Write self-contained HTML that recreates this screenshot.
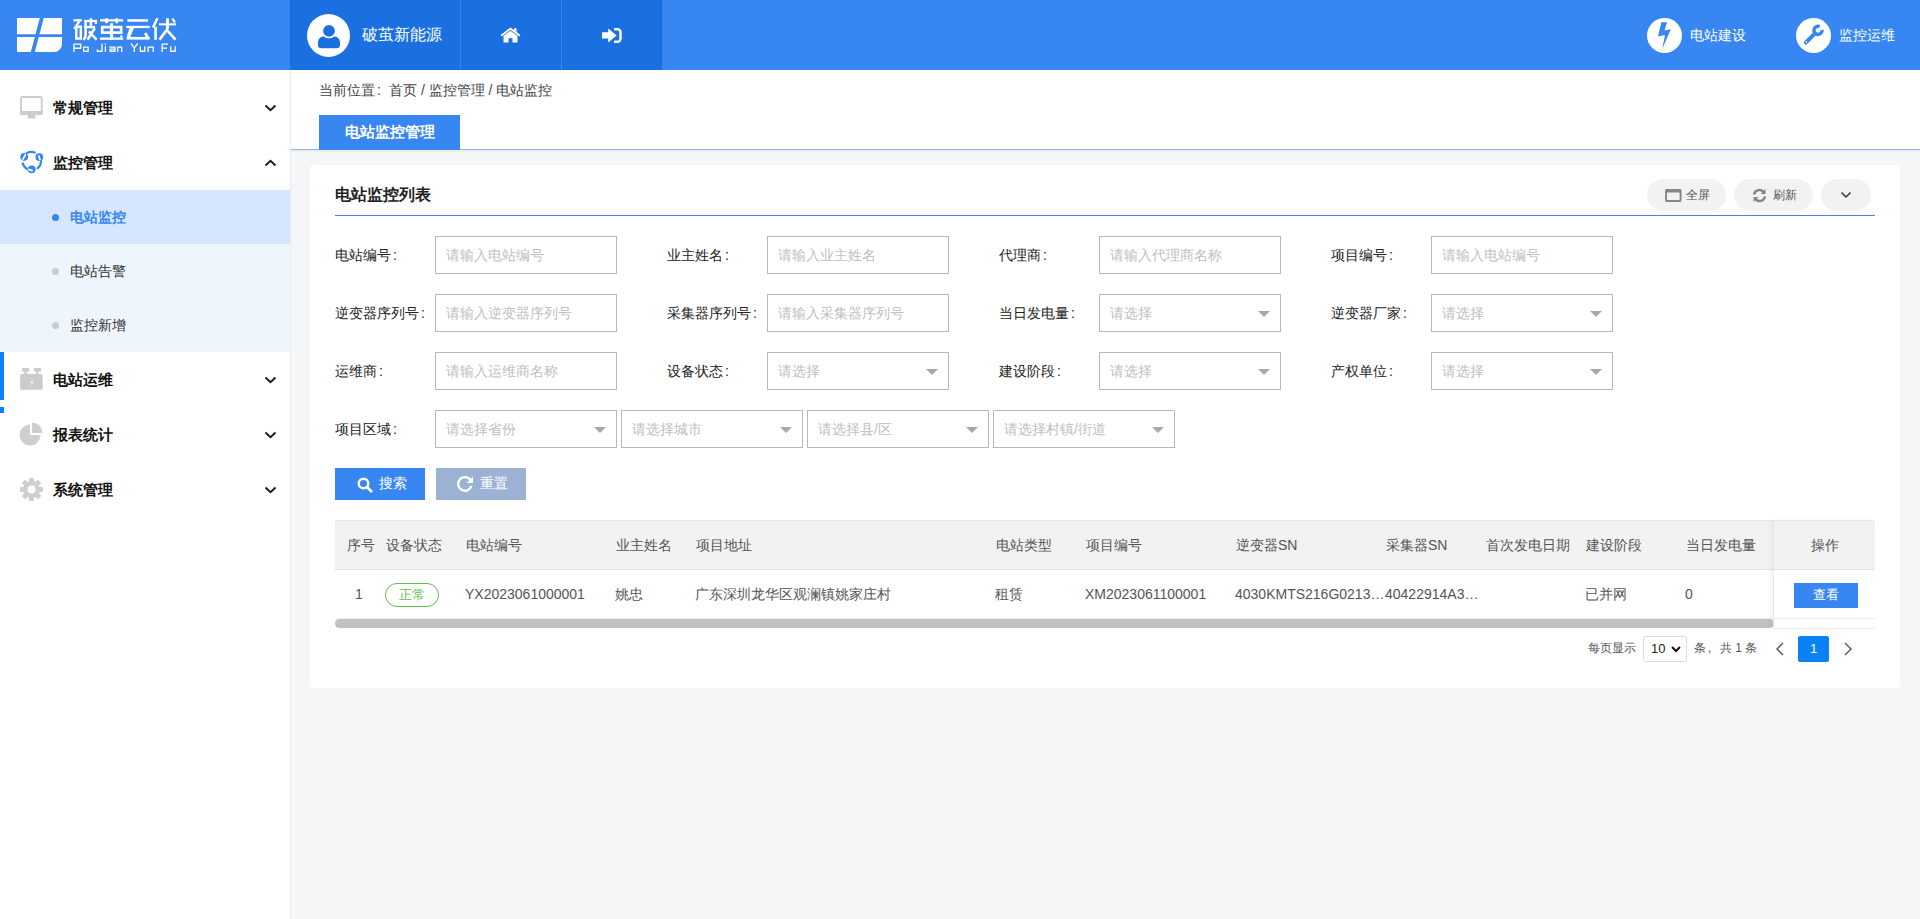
<!DOCTYPE html>
<html><head><meta charset="utf-8">
<style>
*{box-sizing:border-box;margin:0;padding:0}
html,body{width:1920px;height:919px;overflow:hidden;background:#f4f6f8;font-family:"Liberation Sans",sans-serif;color:#333}
.a{position:absolute}
#hdr{position:absolute;left:0;top:0;width:1920px;height:70px;background:#3886f2}
#hdrdark{position:absolute;left:290px;top:0;width:372px;height:70px;background:#1b70e1}
.vdiv{position:absolute;top:0;width:1px;height:70px;background:#3a82ea}
#side{position:absolute;left:0;top:70px;width:291px;height:849px;background:#fff;border-right:1px solid #ebebeb}
.mi{position:absolute;left:0;width:290px;height:55px}
.mi .t{position:absolute;left:53px;top:0;line-height:55px;font-size:15px;font-weight:bold;color:#111}
.mi svg.ic{position:absolute;left:19px;top:15px}
.mi svg.chev{position:absolute;left:263.5px;top:23px}
.sub{position:absolute;left:0;width:290px;height:54px}
.sub .dot{position:absolute;left:52px;top:24px;width:7px;height:7px;border-radius:50%;background:#ccc}
.sub .t{position:absolute;left:70px;top:0;line-height:54px;font-size:14px;color:#333}
#band{position:absolute;left:291px;top:70px;width:1629px;height:80px;background:#fff;border-bottom:1px solid #8db9f3}
#card{position:absolute;left:310px;top:165px;width:1590px;height:523px;background:#fff;border-radius:4px}
.lbl{position:absolute;font-size:14px;color:#222;line-height:38px;height:38px}
.inp{position:absolute;width:182px;height:38px;border:1px solid #b8b8b8;background:#fff;font-size:14px;color:#c0c0c0;line-height:36px;padding-left:10px}
.inp .car{position:absolute;right:10px;top:16px;width:0;height:0;border-left:6px solid transparent;border-right:6px solid transparent;border-top:6px solid #a8a8a8}
.pill{position:absolute;top:179px;height:32px;border-radius:16px;background:#f2f2f2;font-size:12px;color:#555;line-height:32px}
.c{display:inline-block;width:14px;padding-left:2px}
.th{position:absolute;top:520px;line-height:50px;font-size:14px;color:#555}
.td{position:absolute;top:570px;line-height:48px;font-size:14px;color:#555}
</style></head><body>
<div id="hdr"></div>
<div id="hdrdark"></div>
<div class="vdiv" style="left:460px"></div>
<div class="vdiv" style="left:561px"></div>

<!-- logo -->
<svg class="a" style="left:17px;top:18px" width="46" height="35" viewBox="0 0 46 35">
  <path d="M0 0H45V26A8 8 0 0 1 37 34H0Z" fill="#fff"/>
  <path d="M0 17.6H46" stroke="#3886f2" stroke-width="2.6"/>
  <path d="M25.06 -1L15.27 36" stroke="#3886f2" stroke-width="3.8"/>
</svg>
<svg class="a" style="left:70px;top:15px" width="110" height="30" viewBox="0 0 110 30" fill="none" stroke="#fff">
  <g stroke-width="2.3">
  <path d="M3.5 5.3H11.8"/><path d="M9.3 6.3L4.2 13.8"/>
  <rect x="6.3" y="11.7" width="4.5" height="11.8" stroke-width="2.5"/>
  <path d="M15.6 4.9V20Q15.6 23 13.4 24.8" stroke-width="2.6"/>
  <path d="M14.3 5.95H26.9" stroke-width="2.1"/><path d="M25.9 4.9V9"/>
  <path d="M20.9 3.3V10.8" stroke-width="2.6"/>
  <path d="M14.3 12.1H25.2" stroke-width="2.4"/>
  <path d="M24.8 13L17.6 24.6" stroke-width="2.6"/><path d="M18.8 16.3L26.6 24.6" stroke-width="2.6"/>
  </g>
  <g stroke-width="2.3">
  <path d="M30 5.35H53.2"/><path d="M36.55 3.3V8.2" stroke-width="2.7"/><path d="M46.7 3.3V8.2" stroke-width="2.6"/>
  <path d="M41.6 8.2V24.8" stroke-width="3"/>
  <rect x="32.2" y="12.1" width="18.95" height="5.5" stroke-width="2.65"/>
  <path d="M30 23.65H53.2"/><path d="M51.4 20.3V22.6" stroke-width="2.2"/>
  </g>
  <g stroke-width="2.5">
  <path d="M57.4 5.45H78.1"/><path d="M56.2 11.95H79.7" stroke-width="2.3"/>
  <path d="M59.5 13.1L64 13.1 60.2 22 56.6 22Z" fill="#fff" stroke="none"/>
  <path d="M56.6 23.25H79.7" stroke-width="2.7"/>
  <path d="M75.3 18L78.1 23.5" stroke-width="2.8"/>
  </g>
  <g stroke-width="2.6">
  <path d="M87.4 3.3L83 12.6" stroke-width="2.5"/><path d="M85.6 11.7V24.8"/>
  <path d="M88.9 9.35H105.9" stroke-width="2.1"/><path d="M97.5 3.3V14" stroke-width="2.9"/>
  <path d="M97.4 14L89.5 24.6" stroke-width="2.7"/><path d="M97.4 15.7L105.5 24.6" stroke-width="2.7"/>
  <path d="M102.3 3.6L105 7.2" stroke-width="2.4"/>
  </g>
</svg>
<svg class="a" style="left:70px;top:40px" width="110" height="15" viewBox="0 0 110 15" fill="none" stroke="#fff" stroke-width="1.3" stroke-linejoin="round">
  <path d="M3.9 12V4.15H10.8V8.25H3.9"/><rect x="13.65" y="7.05" width="4.5" height="4.2"/>
  <path d="M32 3.4V11.25H27.35V9.6"/><path d="M35.4 3.4V4.9M35.4 6.3V12"/>
  <path d="M39.3 7.05H45.05V11.25H40.05V9.2H45.05"/><path d="M47.75 12V7.05H51.65V12"/>
  <path d="M60.9 3.4L64.3 8.2 67.7 3.4M64.3 8.2V12"/><path d="M70.35 6.3V11.25H74.85V6.3"/>
  <path d="M78.15 12V7.05H83.25V12"/><path d="M92.15 12V4.15H98M92.15 8.2H97"/>
  <path d="M100.75 6.3V11.25H105.25V6.3"/>
</svg>

<!-- avatar -->
<svg class="a" style="left:307px;top:14px" width="43" height="43" viewBox="0 0 43 43">
  <circle cx="21.5" cy="21.5" r="21.5" fill="#fff"/>
  <path d="M10.9 28.4A6.2 6.2 0 0 1 17.1 22.2H26.8A6.2 6.2 0 0 1 33 28.4V30.8A3.5 3.5 0 0 1 29.5 34.3H14.4A3.5 3.5 0 0 1 10.9 30.8Z" fill="#1b70e1"/>
  <circle cx="22" cy="16.9" r="7.4" fill="#fff"/>
  <circle cx="22" cy="16.9" r="5.9" fill="#1b70e1"/>
</svg>
<div class="a" style="left:362px;top:24px;font-size:16px;color:#fff;line-height:22px">破茧新能源</div>
<!-- home icon -->
<svg class="a" style="left:500px;top:27.3px" width="21" height="16" viewBox="0 0 21 17" preserveAspectRatio="none">
  <path d="M10.5 0.5L0.6 8.6 1.8 10 10.5 2.9 19.2 10 20.4 8.6 16.5 5.4V1.3H14V3.4Z" fill="#fff"/>
  <path d="M3.5 9.6L10.5 3.9 17.5 9.6V16.5H12.5V12H8.5V16.5H3.5Z" fill="#fff"/>
</svg>
<!-- sign in icon -->
<svg class="a" style="left:601px;top:28px" width="21" height="16" viewBox="0 0 21 16">
  <path d="M1.3 4.3H7.2V0.4L15.7 7.5 7.2 14.6V10.6H1.3Q1 10.6 1 10.3V4.6Q1 4.3 1.3 4.3Z" fill="#fff"/>
  <path d="M13 1.2H16.5A3 3 0 0 1 19.5 4.2V10.8A3 3 0 0 1 16.5 13.8H13" stroke="#fff" stroke-width="2.4" fill="none"/>
</svg>

<!-- right header icons -->
<svg class="a" style="left:1647px;top:18px" width="35" height="35" viewBox="0 0 35 35">
  <circle cx="17.5" cy="17.5" r="17.5" fill="#fff"/>
  <path d="M14.3 4.3H20L17.5 12.5 23.8 11.3 15.3 30.8 18 17 11 18.5Z" fill="#3886f2"/>
</svg>
<div class="a" style="left:1690px;top:25px;font-size:14px;color:#fff;line-height:20px">电站建设</div>
<svg class="a" style="left:1796px;top:18px" width="35" height="35" viewBox="0 0 35 35">
  <circle cx="17.5" cy="17.5" r="17.5" fill="#fff"/>
  <path d="M9.8 24.6L19 15.4" stroke="#3886f2" stroke-width="4" stroke-linecap="round"/>
  <path d="M26.1 11.9A4.1 4.1 0 1 1 23.7 8.6" stroke="#3886f2" stroke-width="3.4" fill="none"/>
  <circle cx="10.4" cy="24.1" r="0.9" fill="#fff"/>
</svg>
<div class="a" style="left:1839px;top:25px;font-size:14px;color:#fff;line-height:20px">监控运维</div>

<!-- sidebar -->
<div id="side"></div>
<div class="mi" style="top:80px">
  <svg class="ic" width="25" height="25" viewBox="0 0 25 25"><rect x="2" y="2" width="20.7" height="17.2" rx="1.3" fill="#fff" stroke="#cccccc" stroke-width="1.8"/><path d="M1.1 15.9H23.6V18.6A1.5 1.5 0 0 1 22.1 20.1H2.6A1.5 1.5 0 0 1 1.1 18.6Z" fill="#cccccc"/><path d="M9.1 20H16L16.7 23.4H8.4Z" fill="#cccccc"/></svg>
  <div class="t">常规管理</div>
  <svg class="chev" width="13" height="9" viewBox="0 0 13 9"><path d="M1.5 2.5L6.5 7.2 11.5 2.5" stroke="#1a1a1a" stroke-width="1.9" fill="none"/></svg>
</div>
<div class="mi" style="top:135px">
  <svg class="a" style="left:16px;top:11px" width="32" height="32" viewBox="0 0 32 32" fill="none" stroke="#3886f2" stroke-width="2.2" stroke-linecap="round">
    <path d="M10.6 7.1A9.6 9.6 0 0 1 18.7 6.5"/><path d="M25.1 14.9A9.6 9.6 0 0 1 21.6 22.2"/><path d="M11.5 23.3A9.6 9.6 0 0 1 6.7 17.4"/>
    <g fill="#3886f2" stroke="none"><circle cx="8.2" cy="10.8" r="3.9"/><circle cx="23.3" cy="11.1" r="3.9"/><circle cx="15.7" cy="23.3" r="3.9"/></g>
    <g stroke="#fff" stroke-width="1.7"><path d="M7 13.2L9.4 8.6"/><path d="M22.9 10L23.9 13.6"/><path d="M12.6 23.4L16.2 24.6"/></g>
  </svg>
  <div class="t">监控管理</div>
  <svg class="chev" width="13" height="9" viewBox="0 0 13 9"><path d="M1.5 7.5L6.5 2.8 11.5 7.5" stroke="#1a1a1a" stroke-width="1.9" fill="none"/></svg>
</div>
<div class="a" style="left:0;top:190px;width:290px;height:162px;background:#eef5fd"></div>
<div class="sub" style="top:190px;background:#d5e6fd"><div class="dot" style="background:#3886f2"></div><div class="t" style="color:#3886f2;font-weight:bold">电站监控</div></div>
<div class="sub" style="top:244px"><div class="dot"></div><div class="t">电站告警</div></div>
<div class="sub" style="top:298px"><div class="dot"></div><div class="t">监控新增</div></div>
<div class="a" style="left:0;top:352px;width:4px;height:48px;background:#0a82f5"></div>
<div class="a" style="left:0;top:407px;width:4px;height:6px;background:#0a82f5"></div>
<div class="mi" style="top:352px">
  <svg class="ic" width="25" height="25" viewBox="0 0 25 25"><g fill="#cccccc"><rect x="3.2" y="1" width="6.8" height="3.6"/><rect x="15" y="1" width="6.9" height="3.6"/><rect x="5.3" y="4.5" width="2.5" height="2.8"/><rect x="17.1" y="4.5" width="2.3" height="2.8"/><rect x="1.1" y="7.1" width="22.5" height="15.6" rx="1.6"/></g><path d="M15 11.3L11.2 15.9H13.1L10.2 19.9 14.9 14.7H13Z" fill="#fff"/></svg>
  <div class="t">电站运维</div>
  <svg class="chev" width="13" height="9" viewBox="0 0 13 9"><path d="M1.5 2.5L6.5 7.2 11.5 2.5" stroke="#1a1a1a" stroke-width="1.9" fill="none"/></svg>
</div>
<div class="mi" style="top:407px">
  <svg class="ic" style="top:14.3px" width="25" height="25" viewBox="0 0 25 25"><path d="M11 3.5A10.5 10.5 0 1 0 21.5 14H11Z" fill="#cfcfcf"/><path d="M13 1.5A10.5 10.5 0 0 1 23.5 12H13Z" fill="#cfcfcf"/></svg>
  <div class="t">报表统计</div>
  <svg class="chev" width="13" height="9" viewBox="0 0 13 9"><path d="M1.5 2.5L6.5 7.2 11.5 2.5" stroke="#1a1a1a" stroke-width="1.9" fill="none"/></svg>
</div>
<div class="mi" style="top:462px">
  <svg class="ic" width="25" height="25" viewBox="0 0 25 25"><g fill="#cfcfcf"><circle cx="12.5" cy="12.5" r="8.5"/><rect x="10" y="1" width="5" height="23" rx="1"/><rect x="10" y="1" width="5" height="23" rx="1" transform="rotate(45 12.5 12.5)"/><rect x="10" y="1" width="5" height="23" rx="1" transform="rotate(90 12.5 12.5)"/><rect x="10" y="1" width="5" height="23" rx="1" transform="rotate(135 12.5 12.5)"/></g><circle cx="12.5" cy="12.5" r="4" fill="#fff"/></svg>
  <div class="t">系统管理</div>
  <svg class="chev" width="13" height="9" viewBox="0 0 13 9"><path d="M1.5 2.5L6.5 7.2 11.5 2.5" stroke="#1a1a1a" stroke-width="1.9" fill="none"/></svg>
</div>

<!-- breadcrumb band -->
<div id="band"></div>
<div class="a" style="left:291px;top:150px;width:1629px;height:1px;background:#eaeae7"></div><div class="a" style="left:291px;top:151px;width:1629px;height:1px;background:#eff0f1"></div>
<div class="a" style="left:319px;top:80px;font-size:14px;color:#444;line-height:20px">当前位置<span class="c">:</span>首页 / 监控管理 / 电站监控</div>
<div class="a" style="left:319px;top:115px;width:141px;height:35px;background:#3886f2;color:#fff;font-size:15px;font-weight:bold;text-align:center;line-height:34px">电站监控管理</div>

<!-- card -->
<div id="card"></div>
<div class="a" style="left:335px;top:183.7px;font-size:16px;font-weight:bold;color:#222;line-height:22px">电站监控列表</div>
<div class="a" style="left:335px;top:215px;width:1540px;height:1px;background:#3886f2"></div>
<div class="pill" style="left:1647px;width:79px">
  <svg class="a" style="left:18px;top:10px" width="17" height="13" viewBox="0 0 17 13"><rect x="1" y="1" width="14.6" height="11" rx="0.8" fill="none" stroke="#858585" stroke-width="1.9"/><rect x="0.5" y="0.5" width="15.6" height="3" rx="0.8" fill="#858585"/></svg>
  <span class="a" style="left:39px;top:-0.5px">全屏</span></div>
<div class="pill" style="left:1734px;width:79px">
  <svg class="a" style="left:18px;top:9px" width="15" height="15" viewBox="0 0 15 15" fill="none" stroke="#858585" stroke-width="2.4"><path d="M2 6.5A5.5 5.5 0 0 1 12 4.5"/><path d="M13 8.5A5.5 5.5 0 0 1 3 10.5"/><path d="M13.5 1V6H8.5Z" fill="#858585" stroke="none"/><path d="M1.5 14V9H6.5Z" fill="#858585" stroke="none"/></svg>
  <span class="a" style="left:39px;top:-0.5px">刷新</span></div>
<div class="pill" style="left:1821px;width:50px">
  <svg class="a" style="left:19px;top:12px" width="12" height="8" viewBox="0 0 12 8"><path d="M1.5 1.5L6 6 10.5 1.5" stroke="#333" stroke-width="1.5" fill="none"/></svg></div>

<!-- form -->
<div class="lbl" style="left:335px;top:236px">电站编号<span class="c">:</span></div>
<div class="inp" style="left:435px;top:236px">请输入电站编号</div>
<div class="lbl" style="left:667px;top:236px">业主姓名<span class="c">:</span></div>
<div class="inp" style="left:767px;top:236px">请输入业主姓名</div>
<div class="lbl" style="left:999px;top:236px">代理商<span class="c">:</span></div>
<div class="inp" style="left:1099px;top:236px">请输入代理商名称</div>
<div class="lbl" style="left:1331px;top:236px">项目编号<span class="c">:</span></div>
<div class="inp" style="left:1431px;top:236px">请输入电站编号</div>

<div class="lbl" style="left:335px;top:294px">逆变器序列号<span class="c">:</span></div>
<div class="inp" style="left:435px;top:294px">请输入逆变器序列号</div>
<div class="lbl" style="left:667px;top:294px">采集器序列号<span class="c">:</span></div>
<div class="inp" style="left:767px;top:294px">请输入采集器序列号</div>
<div class="lbl" style="left:999px;top:294px">当日发电量<span class="c">:</span></div>
<div class="inp" style="left:1099px;top:294px">请选择<i class="car"></i></div>
<div class="lbl" style="left:1331px;top:294px">逆变器厂家<span class="c">:</span></div>
<div class="inp" style="left:1431px;top:294px">请选择<i class="car"></i></div>

<div class="lbl" style="left:335px;top:352px">运维商<span class="c">:</span></div>
<div class="inp" style="left:435px;top:352px">请输入运维商名称</div>
<div class="lbl" style="left:667px;top:352px">设备状态<span class="c">:</span></div>
<div class="inp" style="left:767px;top:352px">请选择<i class="car"></i></div>
<div class="lbl" style="left:999px;top:352px">建设阶段<span class="c">:</span></div>
<div class="inp" style="left:1099px;top:352px">请选择<i class="car"></i></div>
<div class="lbl" style="left:1331px;top:352px">产权单位<span class="c">:</span></div>
<div class="inp" style="left:1431px;top:352px">请选择<i class="car"></i></div>

<div class="lbl" style="left:335px;top:410px">项目区域<span class="c">:</span></div>
<div class="inp" style="left:435px;top:410px">请选择省份<i class="car"></i></div>
<div class="inp" style="left:621px;top:410px">请选择城市<i class="car"></i></div>
<div class="inp" style="left:807px;top:410px">请选择县/区<i class="car"></i></div>
<div class="inp" style="left:993px;top:410px">请选择村镇/街道<i class="car"></i></div>

<div class="a" style="left:335px;top:468px;width:90px;height:32px;background:#3886f2;color:#fff;font-size:14px;line-height:32px">
  <svg class="a" style="left:22px;top:9px" width="16" height="16" viewBox="0 0 16 16"><circle cx="6.5" cy="6.5" r="4.8" fill="none" stroke="#fff" stroke-width="2.4"/><path d="M10 10L14.2 14.2" stroke="#fff" stroke-width="2.8" stroke-linecap="round"/></svg>
  <span class="a" style="left:44px;top:-1px">搜索</span></div>
<div class="a" style="left:436px;top:468px;width:90px;height:32px;background:#9cb2d4;color:#fff;font-size:14px;line-height:32px">
  <svg class="a" style="left:20px;top:7px" width="19" height="18" viewBox="0 0 19 18"><path d="M14.6 5.2A6.8 6.8 0 1 0 15.4 11" fill="none" stroke="#fff" stroke-width="2.4"/><path d="M17 1.5V8H10.5Z" fill="#fff"/></svg>
  <span class="a" style="left:44px;top:-1px">重置</span></div>

<!-- table -->
<div class="a" style="left:335px;top:520px;width:1540px;height:50px;background:#f2f2f2;border-top:1px solid #e8e8e8;border-bottom:1px solid #e3e3e3"></div>
<div class="a" style="left:335px;top:570px;width:1540px;height:49px;background:#fff;border-bottom:1px solid #eee"></div>
<div class="th" style="left:347px">序号</div>
<div class="th" style="left:386px">设备状态</div>
<div class="th" style="left:466px">电站编号</div>
<div class="th" style="left:616px">业主姓名</div>
<div class="th" style="left:696px">项目地址</div>
<div class="th" style="left:996px">电站类型</div>
<div class="th" style="left:1086px">项目编号</div>
<div class="th" style="left:1236px">逆变器SN</div>
<div class="th" style="left:1386px">采集器SN</div>
<div class="th" style="left:1486px">首次发电日期</div>
<div class="th" style="left:1586px">建设阶段</div>
<div class="th" style="left:1686px">当日发电量</div>

<div class="td" style="left:355px">1</div>
<div class="a" style="left:385px;top:583px;width:54px;height:24px;border:1px solid #5dbf4e;border-radius:12px;color:#5dbf4e;font-size:13px;line-height:22px;text-align:center">正常</div>
<div class="td" style="left:465px">YX2023061000001</div>
<div class="td" style="left:615px">姚忠</div>
<div class="td" style="left:695px">广东深圳龙华区观澜镇姚家庄村</div>
<div class="td" style="left:995px">租赁</div>
<div class="td" style="left:1085px">XM2023061100001</div>
<div class="td" style="left:1235px">4030KMTS216G0213…</div>
<div class="td" style="left:1385px">40422914A3…</div>
<div class="td" style="left:1585px">已并网</div>
<div class="td" style="left:1685px">0</div>

<!-- scrollbar -->
<div class="a" style="left:335px;top:619px;width:1439px;height:9px;background:#c1c1c1;border-radius:5px"></div>
<!-- fixed col -->
<div class="a" style="left:1773px;top:520px;width:102px;height:109px;background:#fff;border-left:1px solid #e6e6e6;box-shadow:-3px 0 4px rgba(0,0,0,0.04)"></div>
<div class="a" style="left:1774px;top:520px;width:101px;height:50px;background:#f2f2f2;border-top:1px solid #e8e8e8;border-bottom:1px solid #e3e3e3"></div>
<div class="th" style="left:1774px;width:101px;text-align:center">操作</div>
<div class="a" style="left:1774px;top:618px;width:101px;height:1px;background:#eee"></div>
<div class="a" style="left:1774px;top:628px;width:101px;height:1px;background:#eee"></div>
<div class="a" style="left:1794px;top:583px;width:64px;height:25px;background:#3886f2;color:#fff;font-size:13px;line-height:24px;text-align:center">查看</div>

<!-- pagination -->
<div class="a" style="left:1588px;top:638px;font-size:12px;color:#555;line-height:20px">每页显示</div>
<div class="a" style="left:1643px;top:636px;width:44px;height:26px;border:1px solid #ddd;border-radius:2px;font-size:13px;color:#222;line-height:24px;padding-left:7px">10
  <svg class="a" style="left:27px;top:9px" width="10" height="7" viewBox="0 0 10 7"><path d="M1 1L5 5 9 1" stroke="#111" stroke-width="2" fill="none"/></svg></div>
<div class="a" style="left:1694px;top:638px;font-size:12px;color:#555;line-height:20px">条<span class="c">,</span>共 1 条</div>
<svg class="a" style="left:1775px;top:642px" width="10" height="14" viewBox="0 0 10 14"><path d="M8 1L2 7 8 13" stroke="#555" stroke-width="1.4" fill="none"/></svg>
<div class="a" style="left:1798px;top:636px;width:31px;height:26px;background:#0a82f5;border-radius:2px;color:#fff;font-size:13px;line-height:26px;text-align:center">1</div>
<svg class="a" style="left:1843px;top:642px" width="10" height="14" viewBox="0 0 10 14"><path d="M2 1L8 7 2 13" stroke="#555" stroke-width="1.4" fill="none"/></svg>
</body></html>
